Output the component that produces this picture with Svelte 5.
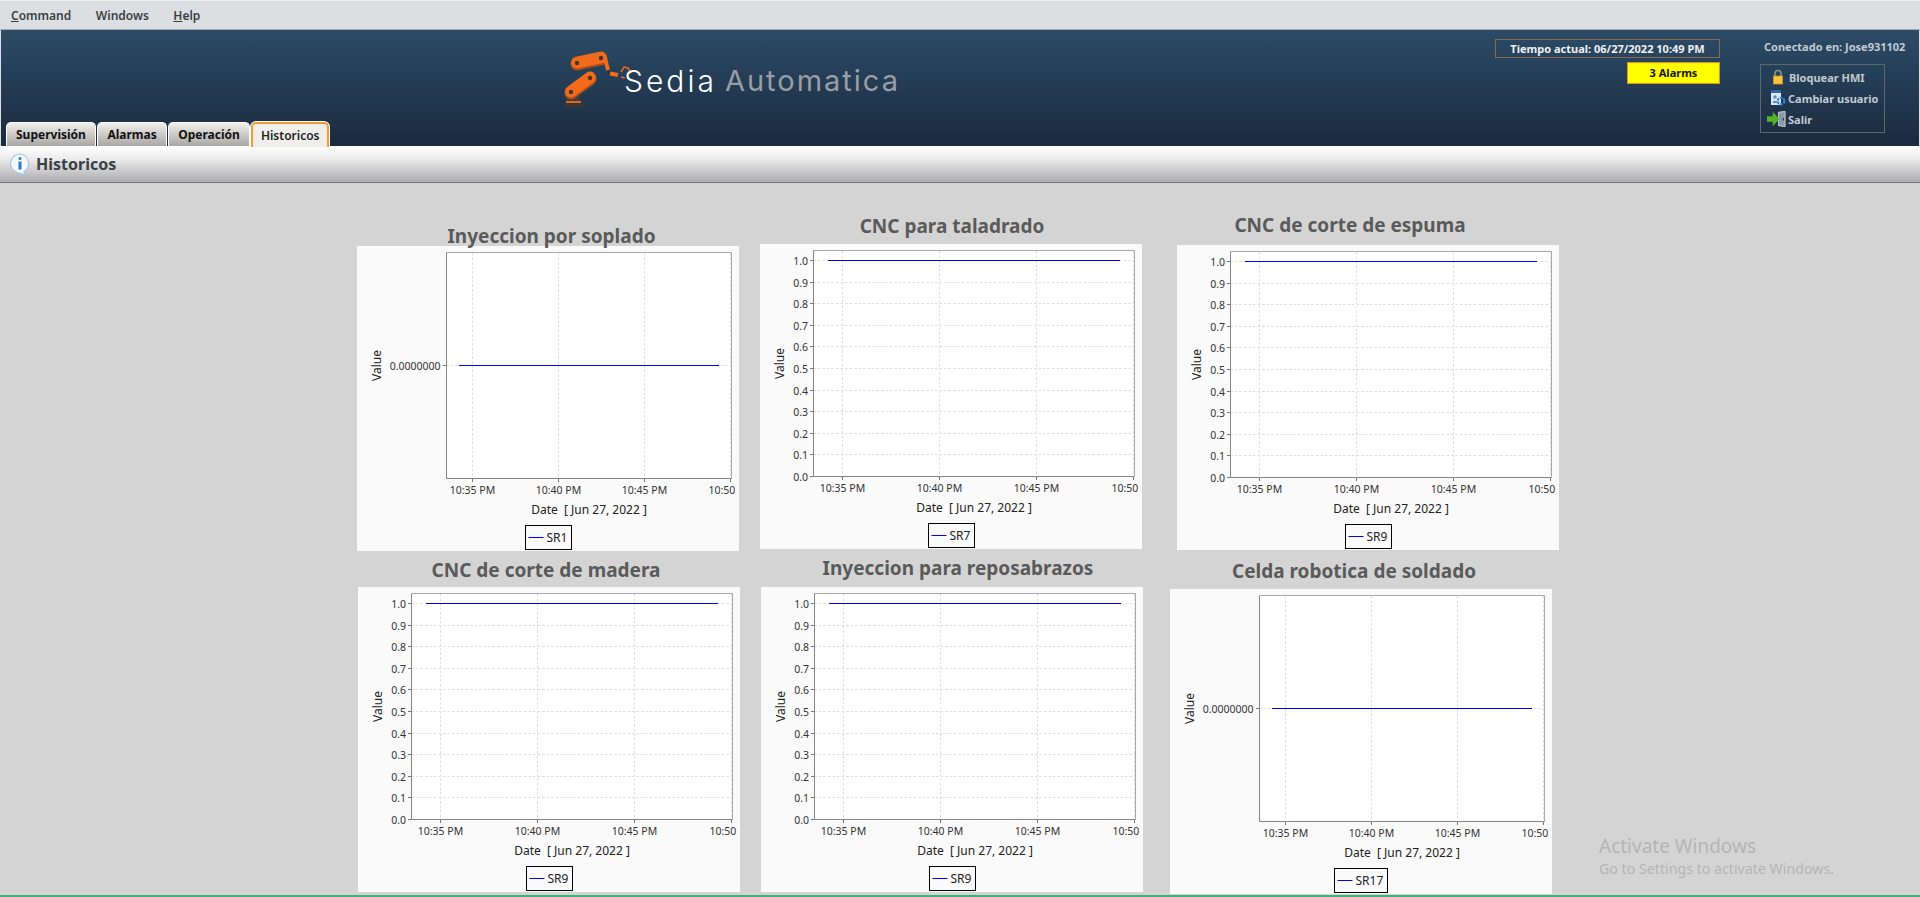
<script lang="ts">
	const menus = [
		{ key: 'C', rest: 'ommand' },
		{ key: '', rest: 'Windows' },
		{ key: 'H', rest: 'elp' }
	];
	const tabs = ['Supervisión', 'Alarmas', 'Operación', 'Historicos'];

	type Chart = { cls: string; title: string; series: string; flat: boolean };
	const charts: Chart[] = [
		{ cls: 'c1', title: 'Inyeccion por soplado', series: 'SR1', flat: true },
		{ cls: 'c2', title: 'CNC para taladrado', series: 'SR7', flat: false },
		{ cls: 'c3', title: 'CNC de corte de espuma', series: 'SR9', flat: false },
		{ cls: 'c4', title: 'CNC de corte de madera', series: 'SR9', flat: false },
		{ cls: 'c5', title: 'Inyeccion para reposabrazos', series: 'SR9', flat: false },
		{ cls: 'c6', title: 'Celda robotica de soldado', series: 'SR17', flat: true }
	];

	const yTicks = [1, 0.9, 0.8, 0.7, 0.6, 0.5, 0.4, 0.3, 0.2, 0.1, 0].map((v, i) => ({
		label: v.toFixed(1),
		y: Math.round(16 + 21.6 * i) + 0.5
	}));
	const xLabels = ['10:35 PM', '10:40 PM', '10:45 PM'];
</script>

<div class="app">
	<nav class="menubar">
		{#each menus as m}
			<span class="menu"><u>{m.key}</u>{m.rest}</span>
		{/each}
	</nav>

	<header class="header">
		<div class="tabs">
			{#each tabs as t, i}
				<div class="tab" class:active={i === 3}>{t}</div>
			{/each}
		</div>

		<div class="logo">
			<svg class="arm" width="64" height="64" viewBox="0 0 64 64">
				<path d="M1 60l3-5h18l3 5z" fill="#33363b" />
				<path d="M5 55V42h13l1 13z" fill="#3a3d42" />
				<rect x="5" y="53" width="15" height="2" fill="#e8641c" />
				<path d="M10 45L29 31" stroke="#a94c18" stroke-width="13" stroke-linecap="round" />
				<path d="M10 43.5L29 29.5" stroke="#f26a1b" stroke-width="12" stroke-linecap="round" />
				<circle cx="10" cy="44" r="2.2" fill="#4a3526" />
				<circle cx="29" cy="30" r="2.2" fill="#4a3526" />
				<path d="M16 16L40 11" stroke="#a94c18" stroke-width="13" stroke-linecap="round" />
				<path d="M16 14.5L40 9.5" stroke="#f26a1b" stroke-width="12" stroke-linecap="round" />
				<circle cx="16" cy="15" r="2.2" fill="#4a3526" />
				<circle cx="40" cy="10" r="2.2" fill="#4a3526" />
				<path d="M44 10L47 22" stroke="#f26a1b" stroke-width="4" />
				<circle cx="48" cy="25" r="2" fill="#3b3330" />
				<path d="M49 25.5L57 27" stroke="#f26a1b" stroke-width="4" />
				<path d="M60 24l3-5 4 1 3 5M60 29l4 1" stroke="#f26a1b" stroke-width="1.5" fill="none" />
			</svg>
			<span class="brand"><span class="sedia">Sedia</span><span class="auto">Automatica</span></span>
		</div>

		<div class="status">
			<div class="clock">Tiempo actual: 06/27/2022 10:49 PM</div>
			<div class="alarms">3 Alarms</div>
		</div>

		<div class="session">
			<div class="connected">Conectado en: Jose931102</div>
			<div class="actions">
				<div class="action lock-row">
					<svg width="12" height="16" viewBox="0 0 12 16">
						<path d="M3 8V4.5a3 3 0 0 1 6 0V8" fill="none" stroke="#8d9296" stroke-width="1.6" />
						<rect x="1.5" y="7" width="9" height="8" fill="#f7c23e" stroke="#d99a1e" stroke-width="0.8" />
					</svg>
					Bloquear HMI
				</div>
				<div class="action user-row">
					<svg width="16" height="18" viewBox="0 0 16 18">
						<rect x="1" y="1" width="10" height="15" fill="#dfe9f5" />
						<rect x="1" y="1" width="10" height="3" fill="#2a69ad" />
						<circle cx="5" cy="8" r="1.8" fill="#5b8fca" />
						<path d="M2.5 14c0-3 5-3 5 0z" fill="#5b8fca" />
						<circle cx="11" cy="12" r="3.3" fill="none" stroke="#2f86dc" stroke-width="2.2" stroke-dasharray="2.5 1" />
					</svg>
					Cambiar usuario
				</div>
				<div class="action exit-row">
					<svg width="21" height="18" viewBox="0 0 22 18">
						<path d="M12 2l7-1v16l-7-1z" fill="#8d9aa3" stroke="#dfe4e7" stroke-width="0.8" />
						<rect x="16.5" y="8" width="1.2" height="2.5" fill="#2b3238" />
						<path d="M0 6h6V1.5L13 9l-7 7.5V12H0z" fill="#54b52a" />
					</svg>
					Salir
				</div>
			</div>
		</div>
	</header>

	<div class="titlebar">
		<svg width="22" height="22" viewBox="0 0 22 22">
			<path d="M11 1a9.5 9.5 0 0 0-3 18.5l8 2-1-3A9.5 9.5 0 0 0 11 1z" fill="#f4f8fd" stroke="#a9c4e6" stroke-width="1.2" />
			<circle cx="11" cy="5.5" r="1.5" fill="#2d78d2" />
			<rect x="9.5" y="8.5" width="3" height="8" fill="#2d78d2" />
		</svg>
		<h1>Historicos</h1>
	</div>

	<main class="canvas">
		{#each charts as c}
			{@const left = c.flat ? 89.5 : 53.5}
			{@const grid = c.flat ? [115.5, 201.5, 287.5, 373.5] : [82.5, 179.5, 276.5, 373.5]}
			{@const legendW = c.series.length > 3 ? 53 : 46}
			{@const legendX = c.series.length > 3 ? 164.5 : 168.5}
			<section class="cell {c.cls}">
				<h2>{c.title}</h2>
				<svg class="chart" width="382" height="305" viewBox="0 0 382 305">
					<rect x={left} y="6.5" width={374.5 - left} height="226" fill="#fff" />

					{#each grid as x}
						<line class="grid" x1={x} x2={x} y1="7" y2="232" />
						<line class="tick" x1={x} x2={x} y1="232.5" y2="236" />
					{/each}
					{#each xLabels as label, i}
						<text class="tl" x={grid[i]} y="248" text-anchor="middle">{label}</text>
					{/each}
					<text class="tl" x="351.5" y="248">10:50</text>

					{#if c.flat}
						<line class="grid" x1={left} x2="374" y1="119.5" y2="119.5" />
						<line class="tick" x1={left - 3.5} x2={left} y1="119.5" y2="119.5" />
						<text class="tl" x="83.5" y="123.5" text-anchor="end">0.0000000</text>
					{:else}
						{#each yTicks as t}
							<line class="grid" x1={left} x2="374" y1={t.y} y2={t.y} />
							<line class="tick" x1={left - 3.5} x2={left} y1={t.y} y2={t.y} />
							<text class="tl" x="48" y={t.y + 4} text-anchor="end">{t.label}</text>
						{/each}
					{/if}

					<path class="frame-light" d="M{left} 6.5H374.5V232.5" />
					<path class="frame" d="M{left} 6.5V232.5H374.5" />
					<line
						class="series"
						x1={c.flat ? 102 : 68}
						x2={c.flat ? 362 : 360}
						y1={c.flat ? 119.5 : 16.5}
						y2={c.flat ? 119.5 : 16.5}
					/>

					<text class="axis" x="0" y="0" text-anchor="middle" transform="translate(24 119.5) rotate(-90)">Value</text>
					<text class="axis date" x={(left + 374.5) / 2} y="267.5" text-anchor="middle">Date  [ Jun 27, 2022 ]</text>

					<rect class="legend" x={legendX} y="279.5" width={legendW} height="24" />
					<line class="series" x1={legendX + 3} x2={legendX + 18} y1="291.5" y2="291.5" />
					<text class="axis" x={legendX + 21} y="296">{c.series}</text>
				</svg>
			</section>
		{/each}
	</main>

	<div class="watermark">
		<div class="wm-big">Activate Windows</div>
		<div class="wm-small">Go to Settings to activate Windows.</div>
	</div>
	<div class="taskline"></div>
</div>

<style>
	:global(body) {
		margin: 0;
		background: #d4d4d4;
	}
	.app {
		position: relative;
		display: flex;
		flex-direction: column;
		height: 897px;
		overflow: hidden;
		font-family: 'Noto Sans', sans-serif;
	}
	.menubar {
		display: flex;
		align-items: center;
		flex: none;
		height: 28px;
		padding-left: 11px;
		gap: 24.5px;
		background: #dcdfe2;
		border-top: 1px solid #eceeef;
		border-bottom: 1px solid #a7abb0;
		font-size: 12px;
		font-weight: 600;
		color: #3b3f44;
	}
	.header {
		display: flex;
		flex: none;
		height: 116px;
		background: linear-gradient(#2c4b67, #1a2a3e);
		border-left: 1px solid #dcdfe2;
		border-right: 1px solid #dcdfe2;
	}
	.tabs {
		width: 554px;
		display: flex;
		align-items: flex-end;
		gap: 1.5px;
		padding-left: 5px;
		box-sizing: border-box;
	}
	.tab {
		height: 24px;
		padding: 0 9px;
		box-sizing: border-box;
		line-height: 23px;
		font-size: 12px;
		font-weight: 700;
		color: #111;
		background: linear-gradient(#f0efec, #a9a7a4);
		border: 1px solid #fff;
		border-bottom: none;
		border-radius: 5px 5px 0 0;
	}
	.tab.active {
		height: 25px;
		margin-bottom: -1px;
		padding: 0 7.5px;
		position: relative;
		background: #f0eeea;
		font-weight: 600;
		color: #222;
		border: 2px solid #f29b2c;
		border-bottom: none;
		box-shadow: 0 0 0 1px #fff;
	}
	.logo {
		width: 940px;
		display: flex;
		align-items: flex-start;
		padding-top: 18px;
		margin-left: 6px;
		margin-right: -6px;
		box-sizing: border-box;
	}
	.arm {
		overflow: visible;
		flex: none;
	}
	.brand {
		display: flex;
		gap: 8px;
		margin-left: -1px;
		margin-top: 15px;
		font-family: 'Inter', sans-serif;
		font-size: 30px;
		line-height: 36px;
		white-space: pre;
	}
	.sedia {
		color: #fff;
		font-weight: 300;
		letter-spacing: 3px;
	}
	.auto {
		color: #9a9da3;
		font-weight: 400;
		font-size: 29px;
		letter-spacing: 2px;
	}
	.status {
		width: 225px;
		display: flex;
		flex-direction: column;
		align-items: flex-end;
		padding-top: 9px;
		font-size: 11px;
		font-weight: 700;
	}
	.clock {
		width: 100%;
		height: 19px;
		box-sizing: border-box;
		line-height: 17px;
		text-align: center;
		color: #eef0f2;
		border: 1px solid #8a6a4c;
	}
	.alarms {
		width: 93px;
		height: 22px;
		box-sizing: border-box;
		margin-top: 4px;
		line-height: 20px;
		text-align: center;
		color: #111;
		background: #ffff00;
		border: 1px solid #ef8a24;
	}
	.session {
		margin-left: 40px;
		width: 154px;
		font-size: 11px;
		font-weight: 700;
		color: #c2cad2;
	}
	.connected {
		margin: 9px 0 0 4px;
		line-height: 16px;
		white-space: nowrap;
	}
	.actions {
		width: 125px;
		height: 69px;
		box-sizing: border-box;
		margin-top: 9px;
		border: 1.5px solid #5b6874;
		display: flex;
		flex-direction: column;
		gap: 3px;
		padding: 3px 0 0;
	}
	.action {
		display: flex;
		align-items: center;
		height: 18px;
		padding-left: 9px;
		white-space: nowrap;
	}
	.lock-row {
		padding-left: 11px;
		gap: 5px;
	}
	.user-row {
		gap: 2px;
	}
	.exit-row {
		padding-left: 6px;
		gap: 0;
	}
	.titlebar {
		display: flex;
		align-items: center;
		flex: none;
		gap: 5px;
		height: 36px;
		padding-left: 9px;
		background: linear-gradient(#fff, #ececec 35%, #adadb0);
		border-bottom: 1px solid #70757f;
	}
	h1 {
		margin: 0;
		font-size: 16px;
		font-weight: 700;
		color: #3a3f45;
	}
	.canvas {
		flex: 1;
		min-height: 0;
		display: grid;
		grid-template-columns: 410px 410px 400px;
		grid-template-rows: 363px 1fr;
		padding-left: 340px;
		background: #d4d4d4;
	}
	.cell {
		width: 382px;
	}
	.chart {
		display: block;
		background: #fafafa;
	}
	h2 {
		width: 382px;
		height: 24px;
		margin: 0;
		line-height: 24px;
		text-align: center;
		font-size: 19px;
		font-weight: 700;
		color: #5a5a5a;
		white-space: nowrap;
	}
	.c1 { margin: 41px 0 0 17px; }
	.c1 h2 { margin: 0 0 -2px 3.5px; }
	.c2 { margin: 31px 0 0 10px; }
	.c2 h2 { margin: 0 0 6px 1px; }
	.c3 { margin: 30px 0 0 17px; }
	.c3 h2 { margin: 0 0 8px -18px; }
	.c4 { margin: 12px 0 0 18px; }
	.c4 h2 { margin: 0 0 5px -3px; }
	.c5 { margin: 10px 0 0 11px; }
	.c5 h2 { margin: 0 0 7px 6px; }
	.c6 { margin: 13px 0 0 10px; }
	.c6 h2 { margin: 0 0 6px -7px; }

	.grid {
		stroke: #dedede;
		stroke-width: 1;
		stroke-dasharray: 2.5 2;
	}
	.tick {
		stroke: #777;
		stroke-width: 1;
	}
	.frame {
		fill: none;
		stroke: #858585;
		stroke-width: 1;
	}
	.frame-light {
		fill: none;
		stroke: #a8a8a8;
		stroke-width: 1;
	}
	.series {
		stroke: #0000ff;
		stroke-width: 1;
	}
	.legend {
		fill: none;
		stroke: #000;
		stroke-width: 1;
	}
	.tl {
		font-size: 10.5px;
		fill: #333;
	}
	.axis {
		font-size: 12px;
		fill: #222;
	}
	.date {
		white-space: pre;
	}
	.watermark {
		position: absolute;
		left: 1599px;
		top: 833px;
		color: #b4b4b4;
		white-space: nowrap;
	}
	.wm-big {
		font-size: 19px;
		line-height: 27px;
	}
	.wm-small {
		font-size: 14.2px;
		line-height: 18px;
	}
	.taskline {
		height: 2px;
		flex: none;
		background: #3cb371;
	}
</style>
